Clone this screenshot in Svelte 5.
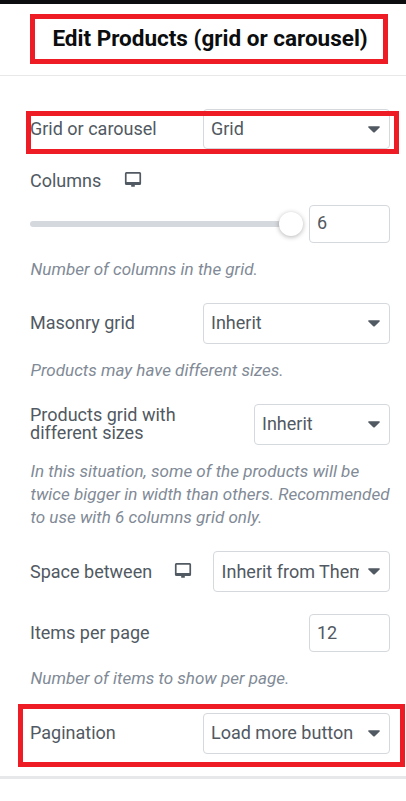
<script lang="ts">
  let layout = $state('Grid');
  let columns = $state(6);
  let masonry = $state('Inherit');
  let sizes = $state('Inherit');
  let spacing = $state('Inherit from Theme Settings');
  let perPage = $state(12);
  let pagination = $state('Load more button');

  const maxColumns = 6;
  let position = $derived((columns / maxColumns) * 100);
</script>

{#snippet desktopIcon()}
  <svg class="device" viewBox="0 0 18 15" aria-hidden="true">
    <path
      fill-rule="evenodd"
      d="M2.400 0h13.200A1.500 1.500 0 0 1 17.100 1.500v10a1.500 1.500 0 0 1-1.500 1.500h-4.800v1.800H7.200V13H2.400A1.500 1.500 0 0 1 .9 11.500v-10A1.500 1.500 0 0 1 2.400 0zM2.600 1.700v8.400h12.800V1.700z"
    />
  </svg>
{/snippet}

{#snippet caret()}
  <svg class="caret" viewBox="0 0 12 7" aria-hidden="true">
    <path d="M.9.3h10.2c.8 0 1 .7.5 1.2L7 6.1a1.4 1.4 0 0 1-2 0L.4 1.500C-.1 1 .1.3.9.3z" />
  </svg>
{/snippet}

<div class="panel">
  <header>
    <h1>Edit Products (grid or carousel)</h1>
    <div class="mark mark-title"></div>
  </header>

  <div class="controls">
    <div class="row first">
      <label for="layout">Grid or carousel</label>
      <div class="select">
        <select id="layout" bind:value={layout}>
          <option>Grid</option>
          <option>Carousel</option>
        </select>
        {@render caret()}
      </div>
      <div class="mark mark-layout"></div>
    </div>

    <div class="row heading">
      <label for="columns">Columns</label>
      {@render desktopIcon()}
    </div>
    <div class="row slider-row">
      <div class="slider">
        <div class="track">
          <div class="handle" style="left: {position}%"></div>
        </div>
      </div>
      <input id="columns" type="number" bind:value={columns} />
    </div>
    <p>Number of columns in the grid.</p>

    <div class="row">
      <label for="masonry">Masonry grid</label>
      <div class="select">
        <select id="masonry" bind:value={masonry}>
          <option>Inherit</option>
        </select>
        {@render caret()}
      </div>
    </div>
    <p>Products may have different sizes.</p>

    <div class="row">
      <label for="sizes" class="wrap">Products grid with different sizes</label>
      <div class="select narrow">
        <select id="sizes" bind:value={sizes}>
          <option>Inherit</option>
        </select>
        {@render caret()}
      </div>
    </div>
    <p>
      In this situation, some of the products will be twice bigger in width than others.
      Recommended to use with 6 columns grid only.
    </p>

    <div class="row spacing">
      <label for="spacing">Space between</label>
      {@render desktopIcon()}
      <div class="select medium">
        <select id="spacing" bind:value={spacing}>
          <option>Inherit from Theme Settings</option>
        </select>
        {@render caret()}
      </div>
    </div>

    <div class="row number">
      <label for="per-page">Items per page</label>
      <input id="per-page" type="number" bind:value={perPage} />
    </div>
    <p>Number of items to show per page.</p>

    <div class="row last">
      <label for="pagination">Pagination</label>
      <div class="select">
        <select id="pagination" bind:value={pagination}>
          <option>Load more button</option>
        </select>
        {@render caret()}
      </div>
      <div class="mark mark-pagination"></div>
    </div>
  </div>
</div>

<style>
  :global(body) {
    background-color: #fff;
  }

  .panel {
    box-sizing: border-box;
    width: 406px;
    height: 801px;
    overflow: hidden;
    border-top: 4px solid #0c0d0e;
    background-color: #fff;
    font-family: Roboto, sans-serif;
    color: #515962;
  }

  header {
    position: relative;
    box-sizing: border-box;
    height: 72px;
    padding-left: 52.4px;
    border-bottom: 1px solid #e6e8ea;
  }

  h1 {
    margin: 0;
    font-size: 22.5px;
    font-weight: 700;
    line-height: 68px;
    white-space: nowrap;
    color: #0c0d0e;
  }

  .controls {
    box-sizing: border-box;
    height: 703px;
    padding: 33px 16px 0 30px;
    border-bottom: 3px solid #e6e8ea;
  }

  .row {
    position: relative;
    display: flex;
    align-items: center;
    height: 41px;
  }

  .row.first {
    height: 40px;
  }

  .row.heading {
    height: 20px;
    margin-top: 22px;
  }

  .row.slider-row {
    height: 38px;
    margin-top: 14px;
  }

  .row.number {
    height: 38px;
    margin-top: 22px;
  }

  .row.last {
    margin-top: 23px;
  }

  label {
    padding-bottom: 2px;
    font-size: 18px;
    line-height: 18px;
    white-space: nowrap;
  }

  .first label {
    padding-bottom: 0;
  }

  .heading label,
  .spacing label,
  .number label {
    padding-bottom: 0;
  }

  label.wrap {
    width: 160px;
    white-space: normal;
  }

  p {
    margin: 15px -10px 22px 0.5px;
    font-size: 17.05px;
    font-style: italic;
    line-height: 23px;
    color: #818a96;
  }

  .select {
    position: relative;
    width: 187px;
    height: 100%;
    margin-left: auto;
  }

  .select.medium {
    width: 177px;
  }

  .select.narrow {
    width: 136px;
  }

  select,
  input {
    box-sizing: border-box;
    margin: 0;
    border: 1px solid #d5d8dc;
    border-radius: 4px;
    background-color: transparent;
    font-family: inherit;
    font-size: 18px;
    color: inherit;
    appearance: none;
    outline: none;
  }

  select {
    width: 100%;
    height: 100%;
    padding: 0 30px 2px 7px;
    text-overflow: clip;
  }

  .first select {
    padding-bottom: 1px;
  }

  .medium select {
    padding: 0 30px 0 7.6px;
  }

  input {
    width: 81px;
    height: 38px;
    margin-left: auto;
    padding: 0 7px 2px;
    appearance: textfield;
  }

  .slider-row input {
    padding-bottom: 4px;
  }

  .device {
    width: 18px;
    height: 15px;
    margin: 0 0 2px 23px;
    fill: #515962;
  }

  .heading .device {
    margin-bottom: 3px;
  }

  .spacing .device {
    margin-left: 21.7px;
  }

  .caret {
    position: absolute;
    top: 17px;
    right: 10px;
    width: 12px;
    height: 7px;
    fill: #515962;
    pointer-events: none;
  }

  .slider {
    width: 261px;
  }

  .track {
    position: relative;
    height: 6px;
    border-radius: 3px;
    background-color: #d5d8dc;
  }

  .handle {
    position: absolute;
    top: -9px;
    width: 24px;
    height: 24px;
    margin-left: -12px;
    border-radius: 50%;
    background-color: #fff;
    box-shadow: 0 1px 5px rgba(0, 0, 0, 0.3);
  }

  /* red highlight frames */
  .mark {
    position: absolute;
    box-sizing: border-box;
    border: 5px solid #ee1c25;
    pointer-events: none;
  }

  .mark-title {
    top: 10px;
    left: 30px;
    width: 358px;
    height: 50px;
  }

  .mark-layout {
    top: 2px;
    left: -4px;
    width: 373px;
    height: 43px;
  }

  .mark-pagination {
    top: -9px;
    left: -12px;
    width: 387px;
    height: 63px;
  }
</style>
